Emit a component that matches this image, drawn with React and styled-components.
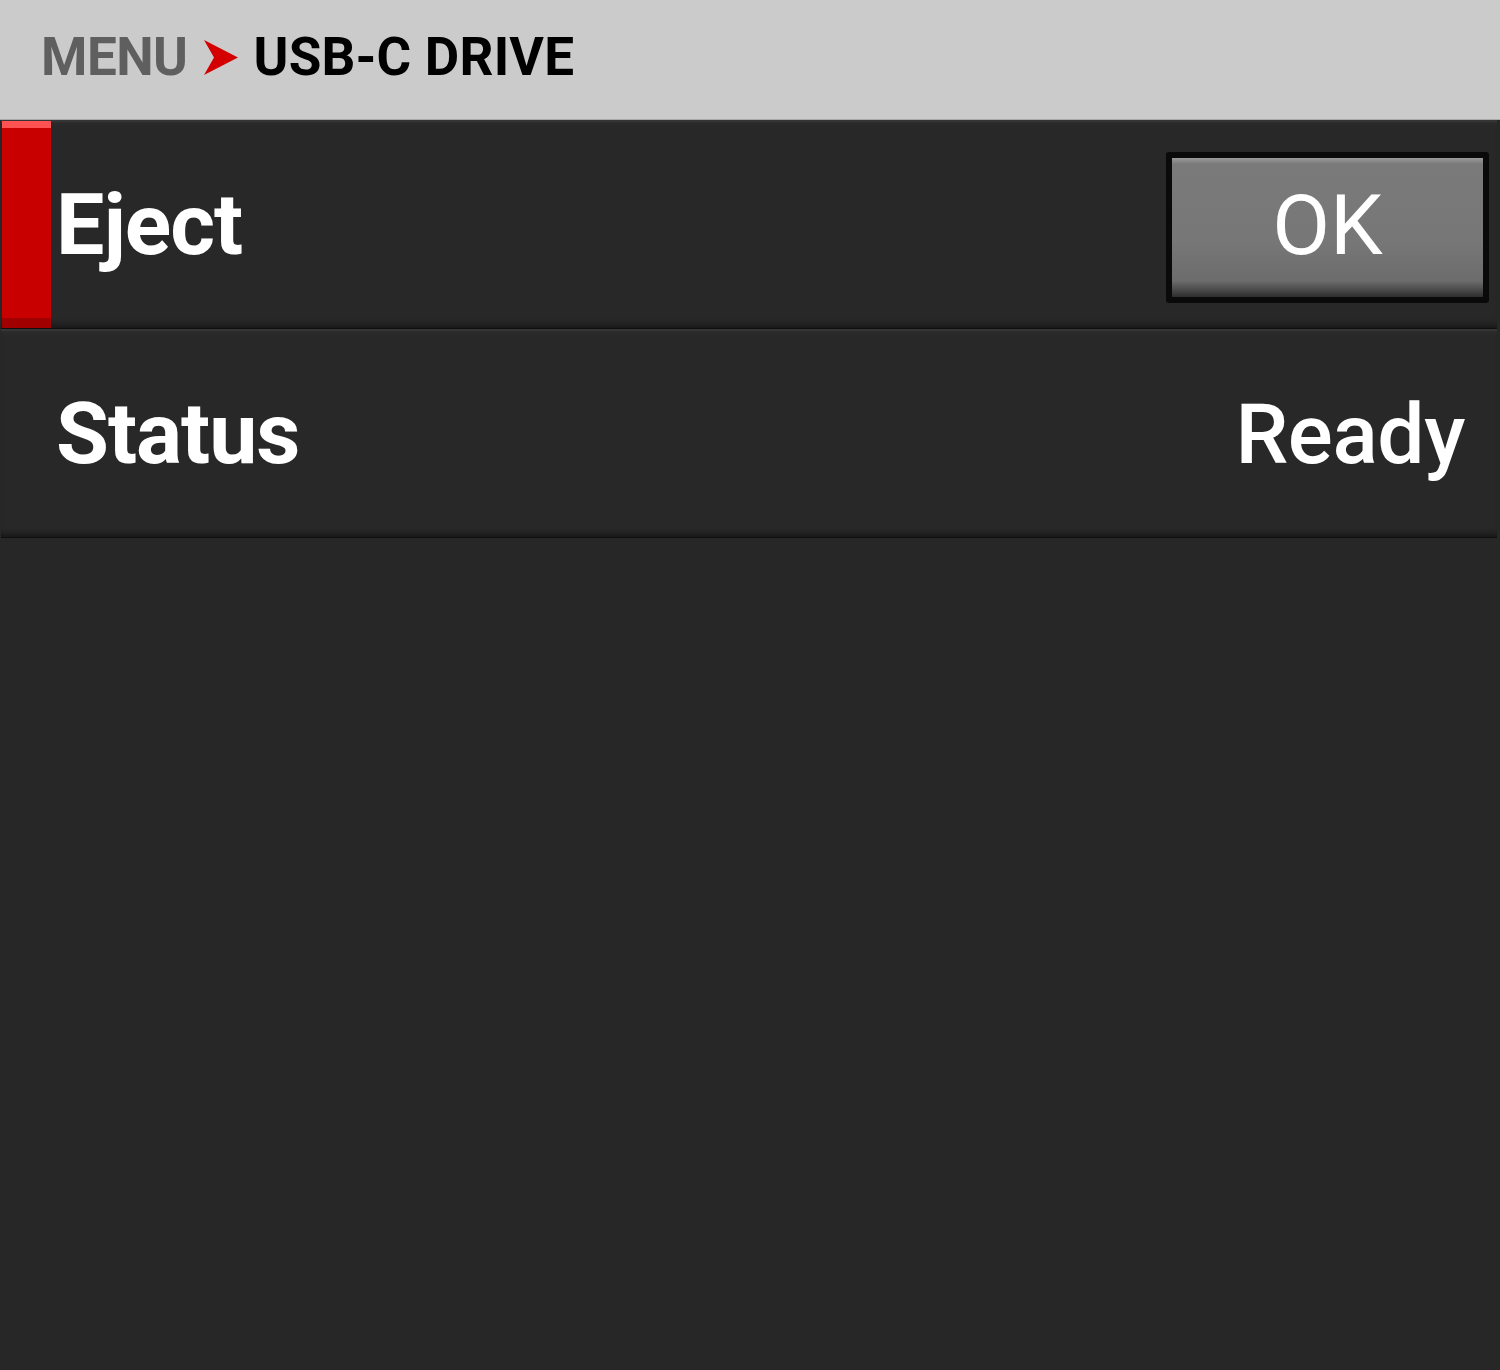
import React from "react";
import styled, { createGlobalStyle } from "styled-components";

const Global = createGlobalStyle`
  html, body { margin: 0; padding: 0; background: #272727; }
  body { font-family: Roboto, "Liberation Sans", sans-serif; }
  * { box-sizing: border-box; }
`;

const Screen = styled.div`
  width: 1500px;
  min-height: 1370px;
  background: #272727;
  display: flex;
  flex-direction: column;
`;

const Header = styled.header`
  height: 120px;
  background: #cbcbcb;
  border-bottom: 1px solid #a9a9a9;
  display: flex;
  align-items: center;
  padding-left: 41px;
  padding-bottom: 5px;
  gap: 16px;
  font-family: Roboto, "Liberation Sans", sans-serif;
  font-weight: 700;
  font-size: 53px;
  line-height: 1;
`;

const Crumb = styled.span`
  color: ${(p) => (p.$current ? "#000000" : "#5f5f5f")};
  letter-spacing: ${(p) => (p.$current ? "0.2px" : "-0.5px")};
`;

const Arrow = styled.svg`
  width: 34px;
  height: 35px;
  flex: none;
  margin-top: 1px;
`;

const List = styled.div`
  display: flex;
  flex-direction: column;
  padding: 0 3px 0 1px;
`;

const Row = styled.div`
  height: 209px;
  display: flex;
  align-items: center;
  background: #282828;
  border-top: 2px solid #353535;
  border-bottom: 1px solid #0f0f0f;
  box-shadow: inset 0 -7px 6px -4px rgba(0, 0, 0, 0.45),
    inset 0 6px 6px -4px rgba(255, 255, 255, 0.03);
  padding-right: 8px;
`;

const Indicator = styled.div`
  width: 49px;
  align-self: stretch;
  margin-left: 1px;
  margin-top: -1px;
  flex: none;
  background: ${(p) =>
    p.$active
      ? "linear-gradient(to bottom, #ff5252 0, #ff5252 7px, #c80000 7px, #c80000 calc(100% - 10px), #a00000 calc(100% - 10px))"
      : "transparent"};
`;

const Label = styled.div`
  flex: 1;
  padding-left: 5px;
  font-weight: 700;
  font-size: 86px;
  line-height: 1;
  color: #ffffff;
  letter-spacing: -1px;
`;

const Value = styled.div`
  font-weight: 500;
  font-size: 84px;
  line-height: 1;
  color: #ffffff;
  padding-right: 24px;
  margin-top: 1px;
  letter-spacing: -0.4px;
`;

const Button = styled.button`
  width: 323px;
  height: 151px;
  margin-top: 4px;
  border: 6px solid #0a0a0a;
  border-radius: 3px;
  background: linear-gradient(
    to bottom,
    #9a9a9a 0,
    #8a8a8a 3px,
    #7a7a7a 6px,
    #777777 60%,
    #6c6c6c calc(100% - 16px),
    #2e2e2e 100%
  );
  color: #ffffff;
  font-family: Roboto, "Liberation Sans", sans-serif;
  font-weight: 400;
  font-size: 84px;
  line-height: 1;
  display: flex;
  align-items: center;
  justify-content: center;
  padding: 0 0 2px 0;
  cursor: pointer;
`;

export default function App() {
  return (
    <Screen>
      <Global />
      <Header>
        <Crumb>MENU</Crumb>
        <Arrow viewBox="0 0 34 35">
          <polygon points="0,0 34,17.5 0,35 10,17.5" fill="#d40000" />
        </Arrow>
        <Crumb $current>USB-C DRIVE</Crumb>
      </Header>
      <List>
        <Row>
          <Indicator $active />
          <Label>Eject</Label>
          <Button>OK</Button>
        </Row>
        <Row>
          <Indicator />
          <Label>Status</Label>
          <Value>Ready</Value>
        </Row>
      </List>
    </Screen>
  );
}
